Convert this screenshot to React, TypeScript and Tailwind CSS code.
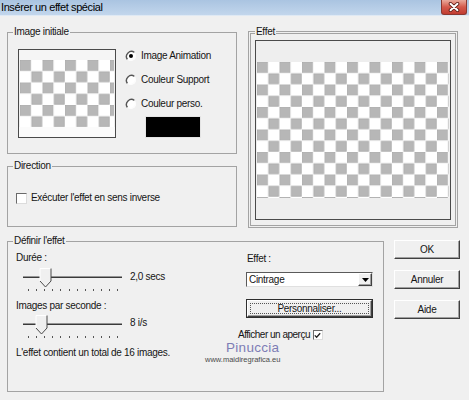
import React from "react";

const FONT = "font-['Liberation_Sans',Arial,sans-serif]";
const raised =
  "bg-[#f0f0f0] border border-t-white border-l-white border-r-[#404040] border-b-[#404040] shadow-[inset_-1px_-1px_0_#a0a0a0]";

function Radio({ checked }: { checked?: boolean }) {
  return (
    <svg width="12" height="12" viewBox="0 0 12 12" className="shrink-0">
      <circle cx="6" cy="6" r="5" fill="#fff" />
      <path d="M9.5 2.5 A5 5 0 0 0 2.5 9.5" fill="none" stroke="#555" strokeWidth="1.4" />
      <path d="M9.5 2.5 A5 5 0 0 1 2.5 9.5" fill="none" stroke="#fcfcfc" strokeWidth="1" />
      {checked && <circle cx="6" cy="6" r="2" fill="#000" />}
    </svg>
  );
}

function CheckBox({ checked, size = 11 }: { checked?: boolean; size?: number }) {
  return (
    <div
      style={{ width: size, height: size }}
      className="shrink-0 bg-white border border-t-[#6a6a6a] border-l-[#6a6a6a] border-r-[#dcdcdc] border-b-[#dcdcdc] flex items-center justify-center"
    >
      {checked && (
        <svg width="7" height="7" viewBox="0 0 7 7">
          <path d="M0.8 3.4 L2.6 5.3 L6.2 1.2" fill="none" stroke="#222" strokeWidth="1.3" />
        </svg>
      )}
    </div>
  );
}

// damier de l'aperçu
function Checker({ id, w, h, top, bottom, topColor, bottomColor }: {
  id: string; w: number; h: number; top: number; bottom: number; topColor: string; bottomColor: string;
}) {
  return (
    <svg width={w} height={h} className="block">
      <defs>
        <pattern id={id} x="1" y={top} width="22.5" height="22.5" patternUnits="userSpaceOnUse">
          <rect x="0" y="0" width="22.5" height="22.5" fill="#fff" />
          <rect x="0.5" y="0.5" width="10" height="10" fill="#b7b7b7" stroke="#ababab" strokeWidth="0.8" />
          <rect x="11.75" y="11.75" width="10" height="10" fill="#b7b7b7" stroke="#ababab" strokeWidth="0.8" />
        </pattern>
      </defs>
      <rect x="0" y="0" width={w} height={top} fill={topColor} />
      <rect x="1" y={top} width={w - 2} height={bottom - top} fill={`url(#${id})`} />
      <rect x="0" y={bottom} width={w} height={h - bottom} fill={bottomColor} />
    </svg>
  );
}

function Slider({ thumb }: { thumb: number }) {
  const ticks = Array.from({ length: 12 }, (_, i) => 12 + i * 8.1);
  return (
    <svg width="112" height="24" className="shrink-0 block">
      <rect x="7" y="8.5" width="99" height="1.5" fill="#3a3a3a" />
      <polygon
        points={`${thumb},0.5 ${thumb + 11},0.5 ${thumb + 11},13 ${thumb + 5.5},19 ${thumb},13`}
        fill="#f0f0f0"
      />
      <path d={`M${thumb} 13 V0.5 H${thumb + 11}`} fill="none" stroke="#fff" strokeWidth="1" />
      <path
        d={`M${thumb + 11} 0.5 V13 L${thumb + 5.5} 19 L${thumb} 13`}
        fill="none"
        stroke="#4a4a4a"
        strokeWidth="1"
      />
      {ticks.map((x) => (
        <rect key={x} x={Math.round(x)} y="21" width="1" height="2" fill="#555" />
      ))}
    </svg>
  );
}

function Group({ label, className, children }: { label: string; className: string; children: React.ReactNode }) {
  return (
    <fieldset className={`shrink-0 border border-[#a3a3a3] ${className}`}>
      <legend className="ml-[5px] px-[1px] leading-[12px]">{label}</legend>
      {children}
    </fieldset>
  );
}

export default function App() {
  return (
    <div
      className={`w-[469px] h-[400px] overflow-hidden bg-[#f0f0f0] text-[#151515] ${FONT} text-[10px] leading-[12px] tracking-[-0.3px] flex flex-col`}
    >
      {/* barre de titre */}
      <div className="h-[16px] shrink-0 flex items-start justify-between bg-gradient-to-b from-[#aac4e1] to-[#c2d6ec] border-b border-[#dfe9f4]">
        <span className="text-[11px] leading-[14px] tracking-[-0.4px] text-black pl-[1px]">
          Insérer un effet spécial
        </span>
        <div className="mr-[2px] w-[26px] h-[15px] rounded-b-[3px] border border-t-0 border-[#8a3830] bg-gradient-to-b from-[#e8a99c] via-[#d4594c] to-[#c13c31] flex items-center justify-center">
          <svg width="12" height="10" viewBox="0 0 12 10">
            <path d="M2.5 1.8 L9.5 8.2 M9.5 1.8 L2.5 8.2" stroke="#5c1c16" strokeWidth="3.6" strokeLinecap="round" />
            <path d="M2.5 1.8 L9.5 8.2 M9.5 1.8 L2.5 8.2" stroke="#fff" strokeWidth="2" strokeLinecap="round" />
          </svg>
        </div>
      </div>

      <div className="pl-[7px] flex flex-col">
        {/* rangée du haut */}
        <div className="mt-[10px] flex items-start">
          <div className="flex flex-col">
            <Group label="Image initiale" className="w-[230px] h-[128px]">
              <div className="flex items-start pl-[10px]">
                <div className="mt-[11px] w-[98px] h-[89px] border border-[#4a4a4a] shrink-0">
                  <Checker id="pinit" w={96} h={87} top={10} bottom={77} topColor="#f5f5f5" bottomColor="#fbfbfb" />
                </div>
                <div className="ml-[9px] mt-[12px] flex flex-col gap-[12px]">
                  <div className="flex items-center gap-[4px]">
                    <Radio checked />
                    <span>Image Animation</span>
                  </div>
                  <div className="flex items-center gap-[4px]">
                    <Radio />
                    <span>Couleur Support</span>
                  </div>
                  <div className="flex items-center gap-[4px]">
                    <Radio />
                    <span>Couleur perso.</span>
                  </div>
                  <div className="-mt-[6px] ml-[20px] w-[56px] h-[22px] bg-black border border-[#e4e4e4]" />
                </div>
              </div>
            </Group>

            <Group label="Direction" className="mt-[6px] w-[230px] h-[67px]">
              <div className="mt-[20px] pl-[8px] flex items-center gap-[4px]">
                <CheckBox />
                <span>Exécuter l'effet en sens inverse</span>
              </div>
            </Group>
          </div>

          <fieldset className="shrink-0 ml-[11px] w-[210px] h-[202px] border-[3px] border-double border-[#a3a3a3]">
            <legend className="ml-[4px] px-[1px] leading-[12px]">Effet</legend>
            <div className="mt-[2px] ml-[4px] w-[196px] h-[180px] border border-[#4a4a4a]">
              <Checker id="peff" w={194} h={178} top={21} bottom={157} topColor="#eeeeee" bottomColor="#eeeeee" />
            </div>
          </fieldset>
        </div>

        {/* rangée du bas */}
        <div className="mt-[7px] flex items-start">
          <Group label="Définir l'effet" className="w-[377px] h-[157px]">
            <div className="relative flex items-start pl-[8px]">
              <div className="w-[220px] flex flex-col">
                <span className="mt-[5px]">Durée :</span>
                <div className="mt-[4px] flex items-start">
                  <Slider thumb={24} />
                  <span className="ml-[2px] mt-[3px]">2,0 secs</span>
                </div>
                <span className="mt-[8px]">Images par seconde :</span>
                <div className="mt-[3px] flex items-start">
                  <Slider thumb={20} />
                  <span className="ml-[2px] mt-[2px]">8 i/s</span>
                </div>
                <span className="mt-[8px]">L'effet contient un total de 16 images.</span>
              </div>

              <div className="flex flex-col items-start">
                <span className="mt-[6px] ml-[11px]">Effet :</span>
                <div className="mt-[7px] ml-[10px] w-[127px] h-[15px] bg-white border border-t-[#5a5a5a] border-l-[#5a5a5a] border-r-[#e0e0e0] border-b-[#e0e0e0] flex items-center">
                  <span className="flex-1 pl-[2px]">Cintrage</span>
                  <div className={`${raised} w-[14px] h-[13px] flex items-center justify-center`}>
                    <svg width="7" height="4" viewBox="0 0 7 4">
                      <path d="M0 0 H7 L3.5 4 Z" fill="#000" />
                    </svg>
                  </div>
                </div>
                <div className="mt-[12px] ml-[10px] w-[127px] h-[19px] border border-[#2e2e2e]">
                  <div className={`${raised} w-full h-full p-[2px]`}>
                    <div className="w-full h-full border border-dotted border-[#555] flex items-center justify-center">
                      Personnaliser...
                    </div>
                  </div>
                </div>
                <div className="mt-[11px] ml-[2px] flex items-center gap-[3px]">
                  <span className="tracking-[-0.5px]">Afficher un aperçu</span>
                  <CheckBox checked size={10} />
                </div>
              </div>

              {/* filigrane */}
              <span className="absolute left-[218px] top-[94px] text-[13.5px] leading-[13px] tracking-[0.3px] text-[#7d7db5]">
                Pinuccia
              </span>
              <span className="absolute left-[197px] top-[108px] text-[7.5px] leading-[9px] tracking-[0px] text-[#4a4a4a]">
                www.maidiregrafica.eu
              </span>
            </div>
          </Group>

          <div className="ml-[10px] mt-[5px] flex flex-col gap-[11px]">
            {["OK", "Annuler", "Aide"].map((t) => (
              <div key={t} className={`${raised} w-[66px] h-[19px] flex items-center justify-center`}>
                {t}
              </div>
            ))}
          </div>
        </div>
      </div>
    </div>
  );
}
